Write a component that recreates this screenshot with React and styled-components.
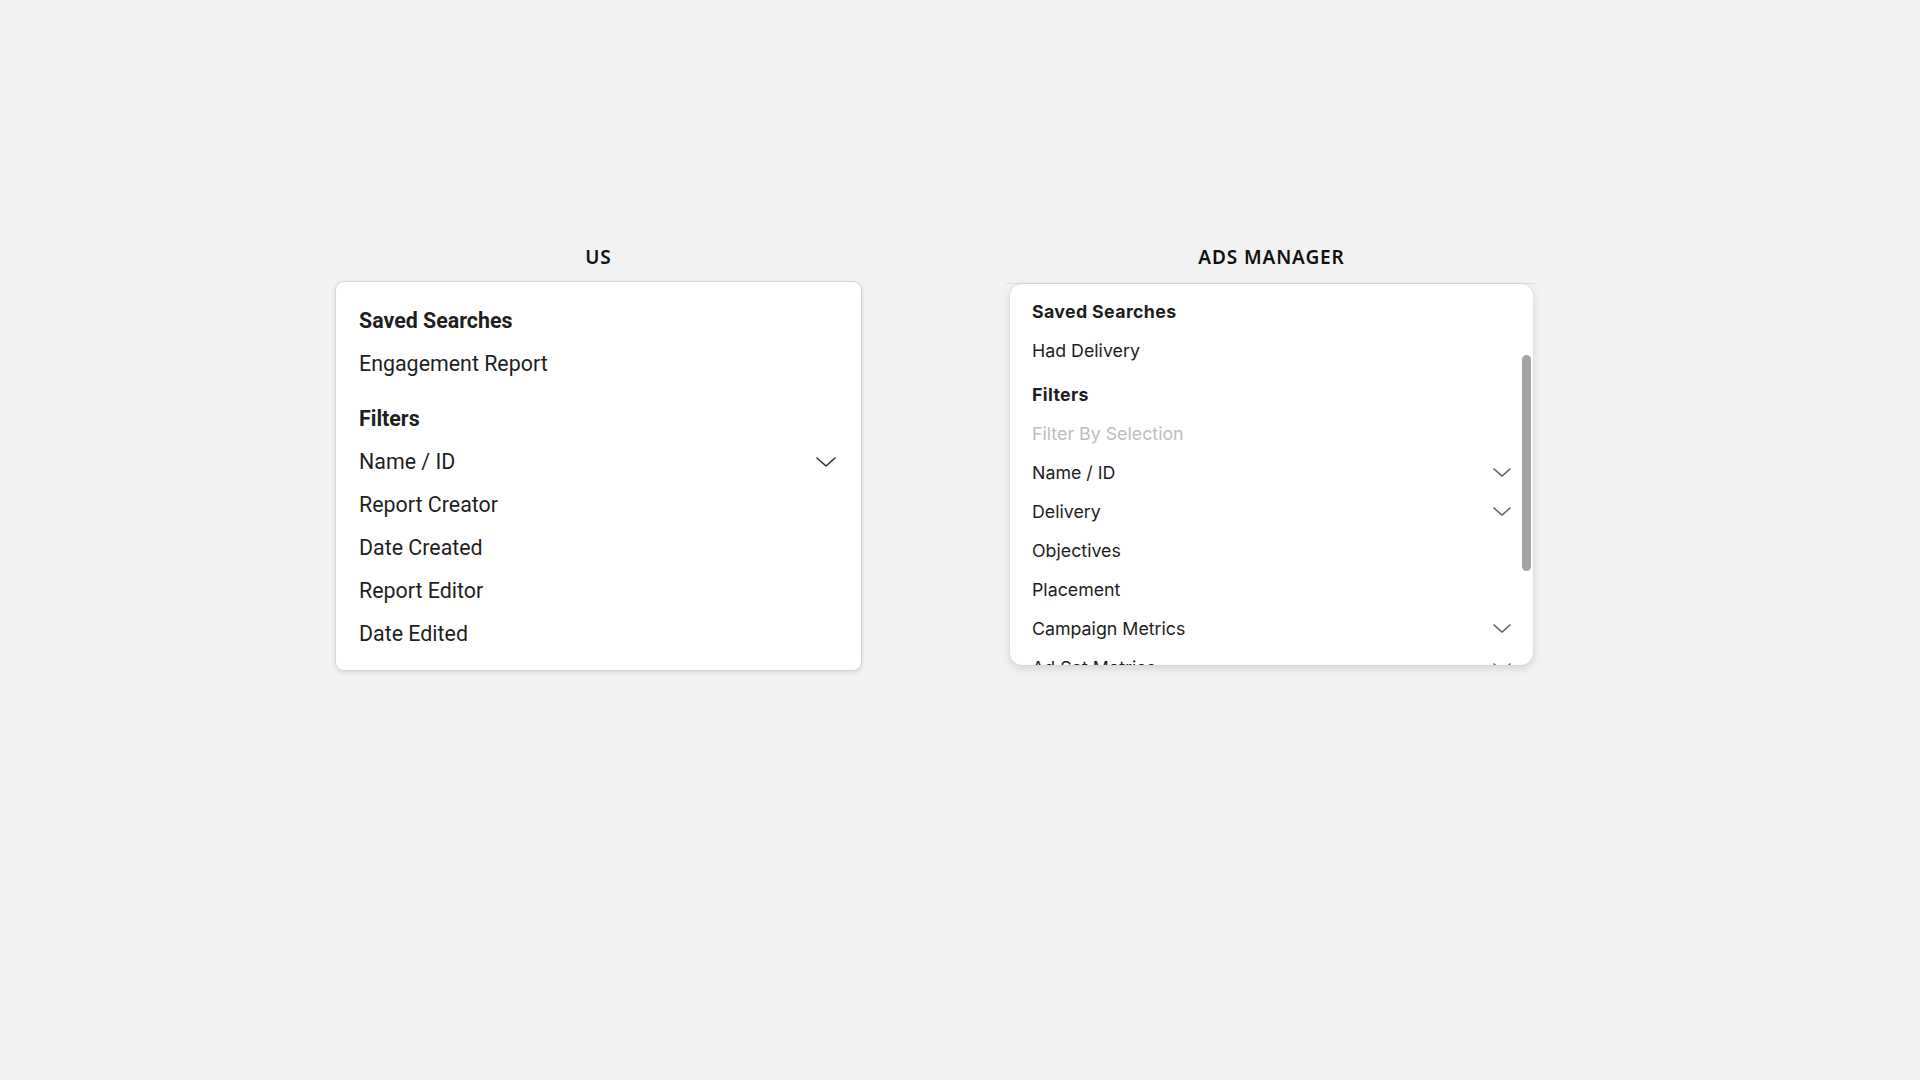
import styled, { createGlobalStyle } from 'styled-components';

const GlobalStyle = createGlobalStyle`
    html, body {
        margin: 0;
        padding: 0;
        background: #f2f2f2;
    }
    * {
        box-sizing: border-box;
    }
`;

const Page = styled.div`
    min-height: 100vh;
    display: grid;
    grid-template-columns: 527px 523px;
    column-gap: 148px;
    justify-content: center;
    align-items: start;
    padding: 245px 52px 0 0;
`;

const Column = styled.div`
    display: flex;
    flex-direction: column;
`;

const Title = styled.div`
    height: 24px;
    line-height: 24px;
    margin-bottom: ${(props) => props.gap}px;
    text-align: center;
    font-family: "Noto Sans", "Open Sans", sans-serif;
    font-weight: 600;
    font-size: 19px;
    letter-spacing: 0.9px;
    color: #111;
`;

// left card: "US"
const UsPanel = styled.div`
    width: 527px;
    height: 390px;
    padding: 17px 25px 15px 23px;
    background: #fff;
    border: 1px solid #d6d6d8;
    border-radius: 9px;
    box-shadow: 0 2px 4px rgba(0, 0, 0, 0.1);
    font-family: Roboto, "Liberation Sans", sans-serif;
    color: #1f1f1f;
`;

const UsRow = styled.div`
    height: 43px;
    display: flex;
    align-items: center;
    justify-content: space-between;
    font-size: 21.4px;
    font-weight: ${(props) => (props.heading ? 700 : 400)};
    margin-top: ${(props) => (props.spaced ? 12 : 0)}px;
`;

// right card: "ADS MANAGER"
const Frame = styled.div`
    margin: 0 -4px;
    padding: 0 4px;
    border-top: 1px solid #e0e0e0;
`;

const AdsPanel = styled.div`
    position: relative;
    width: 523px;
    height: 381px;
    padding: 8px 22px 0 22px;
    overflow: hidden;
    background: #fff;
    border-radius: 12px;
    box-shadow: 0 3px 10px rgba(0, 0, 0, 0.13), 0 0 1px rgba(0, 0, 0, 0.18);
    font-family: Inter, "Noto Sans", sans-serif;
    color: #1c1e21;
`;

const AdsRow = styled.div`
    height: 39px;
    display: flex;
    align-items: center;
    justify-content: space-between;
    font-size: 17.8px;
    font-weight: ${(props) => (props.heading ? 700 : 400)};
    letter-spacing: ${(props) => (props.heading ? 0.35 : 0)}px;
    color: ${(props) => (props.muted ? '#b9bdc4' : '#1c1e21')};
    margin-top: ${(props) => (props.spaced ? 5 : 0)}px;
`;

const ScrollThumb = styled.div`
    position: absolute;
    top: 71px;
    right: 2px;
    width: 9px;
    height: 216px;
    border-radius: 5px;
    background: #a4a4a4;
`;

function Chevron({ width, height, color }) {
    return (
        <svg width={width} height={height} viewBox="0 0 20 10" fill="none" preserveAspectRatio="none">
            <path d="M1 1 L10 9 L19 1" stroke={color} strokeWidth="1.6" strokeLinecap="round" strokeLinejoin="round" />
        </svg>
    );
}

const usItems = [
    { label: 'Saved Searches', heading: true },
    { label: 'Engagement Report' },
    { label: 'Filters', heading: true, spaced: true },
    { label: 'Name / ID', chevron: true },
    { label: 'Report Creator' },
    { label: 'Date Created' },
    { label: 'Report Editor' },
    { label: 'Date Edited' },
];

const adsItems = [
    { label: 'Saved Searches', heading: true },
    { label: 'Had Delivery' },
    { label: 'Filters', heading: true, spaced: true },
    { label: 'Filter By Selection', muted: true },
    { label: 'Name / ID', chevron: true },
    { label: 'Delivery', chevron: true },
    { label: 'Objectives' },
    { label: 'Placement' },
    { label: 'Campaign Metrics', chevron: true },
    { label: 'Ad Set Metrics', chevron: true },
];

function App() {
    return (
        <>
            <GlobalStyle />
            <Page>
                <Column>
                    <Title gap={12}>US</Title>
                    <UsPanel>
                        {usItems.map((item) => (
                            <UsRow key={item.label} heading={item.heading} spaced={item.spaced}>
                                <span>{item.label}</span>
                                {item.chevron && <Chevron width={20} height={10} color="#333" />}
                            </UsRow>
                        ))}
                    </UsPanel>
                </Column>
                <Column>
                    <Title gap={14}>ADS MANAGER</Title>
                    <Frame>
                        <AdsPanel>
                            {adsItems.map((item) => (
                                <AdsRow key={item.label} heading={item.heading} spaced={item.spaced} muted={item.muted}>
                                    <span>{item.label}</span>
                                    {item.chevron && <Chevron width={18} height={9} color="#606770" />}
                                </AdsRow>
                            ))}
                            <ScrollThumb />
                        </AdsPanel>
                    </Frame>
                </Column>
            </Page>
        </>
    );
}

export default App;
